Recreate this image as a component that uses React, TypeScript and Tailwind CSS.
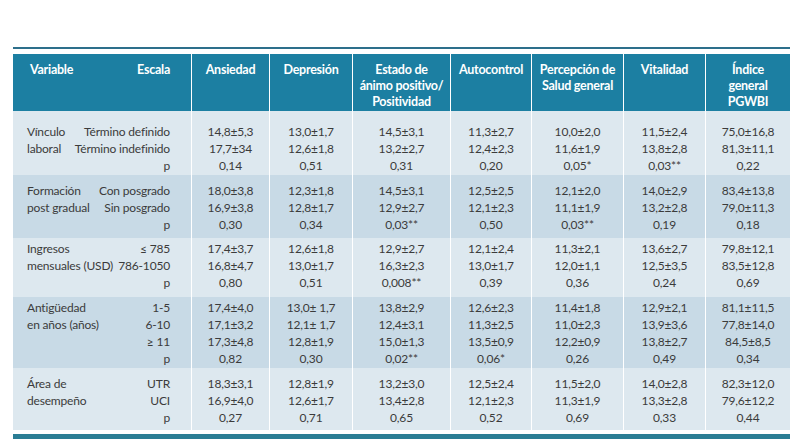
const COLS = 'grid grid-cols-[178px_77px_82px_97px_80px_91px_81px_84px] gap-x-px';

type Row = {
  labels: string[];
  scales: string[];
  values: string[][];
  h: string;
  pt: string;
  bg: string;
};

const ROWS: Row[] = [
  {
    labels: ['Vínculo', 'laboral'],
    scales: ['Término definido', 'Término indefinido', 'p'],
    values: [
      ['14,8±5,3', '17,7±34', '0,14'],
      ['13,0±1,7', '12,6±1,8', '0,51'],
      ['14,5±3,1', '13,2±2,7', '0,31'],
      ['11,3±2,7', '12,4±2,3', '0,20'],
      ['10,0±2,0', '11,6±1,9', '0,05*'],
      ['11,5±2,4', '13,8±2,8', '0,03**'],
      ['75,0±16,8', '81,3±11,1', '0,22'],
    ],
    h: 'h-[64px]',
    pt: 'pt-[12px]',
    bg: 'bg-[#dde8ef]',
  },
  {
    labels: ['Formación', 'post gradual'],
    scales: ['Con posgrado', 'Sin posgrado', 'p'],
    values: [
      ['18,0±3,8', '16,9±3,8', '0,30'],
      ['12,3±1,8', '12,8±1,7', '0,34'],
      ['14,5±3,1', '12,9±2,7', '0,03**'],
      ['12,5±2,5', '12,1±2,3', '0,50'],
      ['12,1±2,0', '11,1±1,9', '0,03**'],
      ['14,0±2,9', '13,2±2,8', '0,19'],
      ['83,4±13,8', '79,0±11,3', '0,18'],
    ],
    h: 'h-[63px]',
    pt: 'pt-[7px]',
    bg: 'bg-[#c8dae6]',
  },
  {
    labels: ['Ingresos', 'mensuales (USD)'],
    scales: ['≤ 785', '786-1050', 'p'],
    values: [
      ['17,4±3,7', '16,8±4,7', '0,80'],
      ['12,6±1,8', '13,0±1,7', '0,51'],
      ['12,9±2,7', '16,3±2,3', '0,008**'],
      ['12,1±2,4', '13,0±1,7', '0,39'],
      ['11,3±2,1', '12,0±1,1', '0,36'],
      ['13,6±2,7', '12,5±3,5', '0,24'],
      ['79,8±12,1', '83,5±12,8', '0,69'],
    ],
    h: 'h-[59px]',
    pt: 'pt-[2px]',
    bg: 'bg-[#dde8ef]',
  },
  {
    labels: ['Antigüedad', 'en años (años)'],
    scales: ['1-5', '6-10', '≥ 11', 'p'],
    values: [
      ['17,4±4,0', '17,1±3,2', '17,3±4,8', '0,82'],
      ['13,0± 1,7', '12,1± 1,7', '12,8±1,9', '0,30'],
      ['13,8±2,9', '12,4±3,1', '15,0±1,3', '0,02**'],
      ['12,6±2,3', '11,3±2,5', '13,5±0,9', '0,06*'],
      ['11,4±1,8', '11,0±2,3', '12,2±0,9', '0,26'],
      ['12,9±2,1', '13,9±3,6', '13,8±2,7', '0,49'],
      ['81,1±11,5', '77,8±14,0', '84,5±8,5', '0,34'],
    ],
    h: 'h-[71px]',
    pt: 'pt-[2px]',
    bg: 'bg-[#c8dae6]',
  },
  {
    labels: ['Área de', 'desempeño'],
    scales: ['UTR', 'UCI', 'p'],
    values: [
      ['18,3±3,1', '16,9±4,0', '0,27'],
      ['12,8±1,9', '12,6±1,7', '0,71'],
      ['13,2±3,0', '13,4±2,8', '0,65'],
      ['12,5±2,4', '12,1±2,3', '0,52'],
      ['11,5±2,0', '11,3±1,9', '0,69'],
      ['14,0±2,8', '13,3±2,8', '0,33'],
      ['82,3±12,0', '79,6±12,2', '0,44'],
    ],
    h: 'h-[62px]',
    pt: 'pt-[7px]',
    bg: 'bg-[#dde8ef]',
  },
];

const HEADERS: string[][] = [
  ['Ansiedad'],
  ['Depresión'],
  ['Estado de', 'ánimo positivo/', 'Positividad'],
  ['Autocontrol'],
  ['Percepción de', 'Salud general'],
  ['Vitalidad'],
  ['Índice', 'general', 'PGWBI'],
];

export default function App() {
  return (
    <div className="w-[807px] h-[442px] bg-white font-['Lato',sans-serif] overflow-hidden">
      <div className="ml-[13px] w-[777px] pt-[47px]">
        {/* top rule */}
        <div className="h-[1.5px] bg-[#2d6f8b]" />
        <div className="h-[5px]" />

        {/* header */}
        <div className={`${COLS} h-[57px] text-white font-bold text-[12.5px] leading-[16px] tracking-[-0.02em]`}>
          <div className="bg-[#1c7fa2] flex justify-between pl-[17px] pr-[21px] pt-[8px]">
            <span>Variable</span>
            <span>Escala</span>
          </div>
          {HEADERS.map((lines, i) => (
            <div key={i} className="bg-[#1c7fa2] text-center pt-[8px]">
              {lines.map((l) => (
                <div key={l}>{l}</div>
              ))}
            </div>
          ))}
        </div>

        {/* body */}
        {ROWS.map((row, r) => (
          <div key={r} className={`${COLS} ${row.h} text-[12px] leading-[17px] tracking-[-0.015em] text-[#3b3b3b]`}>
            <div className={`${row.bg} ${row.pt} flex justify-between gap-[3px] pl-[14px] pr-[21px]`}>
              <div>
                {row.labels.map((l) => (
                  <div key={l} className="whitespace-nowrap">{l}</div>
                ))}
              </div>
              <div className="text-right">
                {row.scales.map((s) => (
                  <div key={s} className="whitespace-nowrap">{s}</div>
                ))}
              </div>
            </div>
            {row.values.map((col, c) => (
              <div key={c} className={`${row.bg} ${row.pt} text-center`}>
                {col.map((v, k) => (
                  <div key={k} className="whitespace-nowrap">{v}</div>
                ))}
              </div>
            ))}
          </div>
        ))}

        {/* bottom rule */}
        <div className="h-[4px]" />
        <div className="h-[5px] bg-[#2b7d94]" />
      </div>
    </div>
  );
}
